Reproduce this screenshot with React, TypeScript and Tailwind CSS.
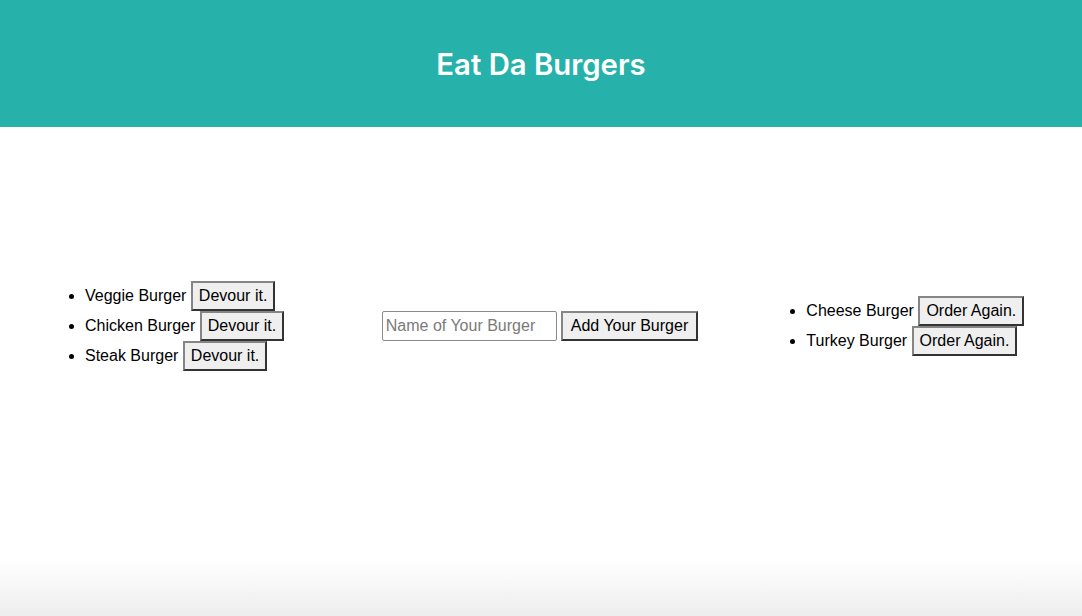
const devoured = ["Veggie Burger", "Chicken Burger", "Steak Burger"];
const eaten = ["Cheese Burger", "Turkey Burger"];

function BurgerButton({ children, wide }: { children: React.ReactNode; wide?: boolean }) {
  return (
    <button
      className={
        "h-[30px] bg-[#efefef] text-black text-[16px] leading-[18px] border-2 border-t-[#858585] border-l-[#858585] border-r-[#333333] border-b-[#333333] " +
        (wide ? "px-[8px]" : "px-[6px]")
      }
    >
      {children}
    </button>
  );
}

function BurgerList({ items, label }: { items: string[]; label: string }) {
  return (
    <ul className="list-disc pl-[85px]">
      {items.map((name) => (
        <li key={name} className="h-[30px] leading-[30px]">
          {name} <BurgerButton>{label}</BurgerButton>
        </li>
      ))}
    </ul>
  );
}

export default function App() {
  return (
    <div className="h-[616px] flex flex-col bg-white text-black text-[16px] font-['Liberation_Sans',Arial,sans-serif]">
      {/* Header */}
      <header className="h-[127px] bg-[#27b1ab] flex items-center justify-center">
        <h1 className="text-white text-[29.3px] font-semibold font-['Inter',sans-serif] mt-[2px]">Eat Da Burgers</h1>
      </header>

      {/* Burgers */}
      <main className="h-[396px] pt-[2px] grid grid-cols-3 items-center">
        <BurgerList items={devoured} label="Devour it." />

        <form className="flex justify-center items-center gap-[4px] pr-[2px]" onSubmit={(e) => e.preventDefault()}>
          <input
            type="text"
            placeholder="Name of Your Burger"
            className="w-[175px] h-[30px] px-[3px] border border-[#8a8a8a] rounded-[2px] text-[16px] placeholder:text-[#7a7a7a] outline-none"
          />
          <BurgerButton wide>Add Your Burger</BurgerButton>
        </form>

        <BurgerList items={eaten} label="Order Again." />
      </main>

      <div className="flex-1" />
      <div className="h-[56px] bg-gradient-to-b from-white to-[#ededed]" />
    </div>
  );
}
